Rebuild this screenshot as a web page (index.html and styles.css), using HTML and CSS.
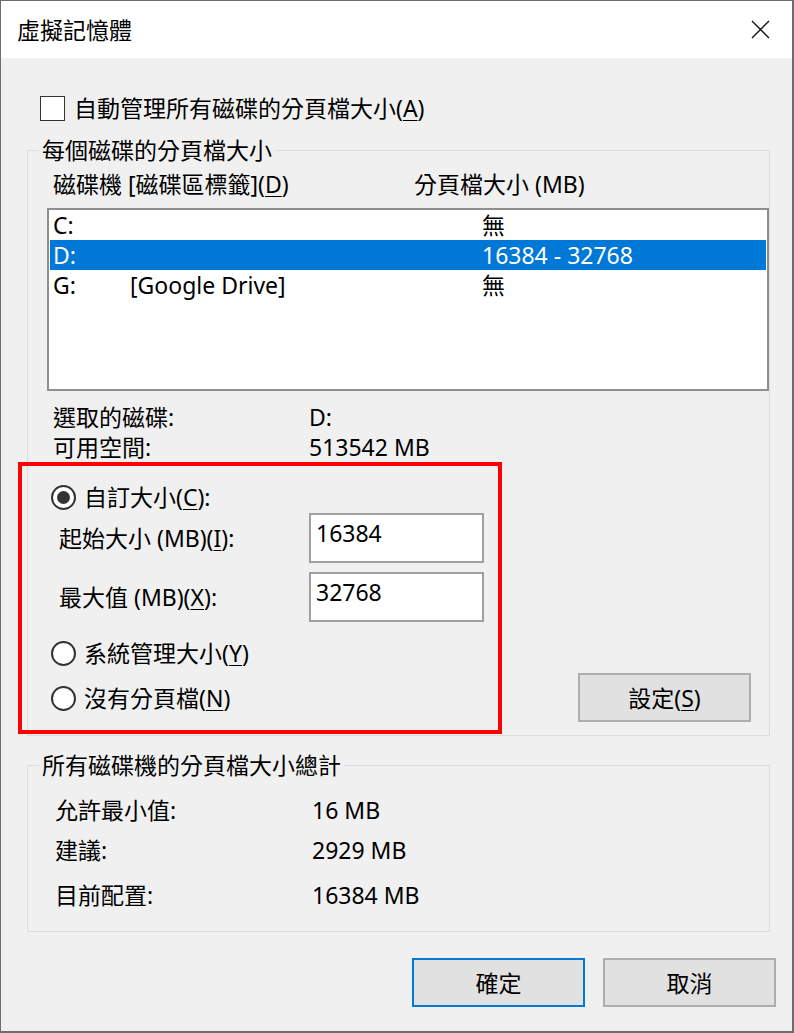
FILE: index.html
```html
<!DOCTYPE html>
<html lang="zh-Hant">
<head>
    <meta charset="UTF-8">
    <meta name="viewport" content="width=device-width, initial-scale=1.0">
    <title>虛擬記憶體</title>
    <link rel="stylesheet" href="styles.css">
</head>
<body>
    <div class="window">
        <div class="titlebar">
            <span class="title">虛擬記憶體</span>
            <span class="close">
                <svg width="19" height="19" viewBox="0 0 19 19">
                    <path d="M1 1 L18 18 M18 1 L1 18" stroke="#111" stroke-width="1.4" fill="none"/>
                </svg>
            </span>
        </div>

        <div class="dialog-body">
            <label class="check-row">
                <span class="checkbox"></span>
                <span>自動管理所有磁碟的分頁檔大小(<u>A</u>)</span>
            </label>

            <fieldset class="group group-drives">
                <legend>每個磁碟的分頁檔大小</legend>

                <div class="disk-header">
                    <span>磁碟機 [磁碟區標籤](<u>D</u>)</span>
                    <span>分頁檔大小 (MB)</span>
                </div>

                <div class="disk-list">
                    <div class="disk-row"><span>C:</span><span></span><span>無</span></div>
                    <div class="disk-row selected"><span>D:</span><span></span><span>16384 - 32768</span></div>
                    <div class="disk-row"><span>G:</span><span>[Google Drive]</span><span>無</span></div>
                </div>

                <div class="disk-info">
                    <span>選取的磁碟:</span><span>D:</span>
                    <span>可用空間:</span><span>513542 MB</span>
                </div>

                <div class="size-area">
                    <div class="size-options">
                        <div class="radio-row first">
                            <span class="radio checked"></span>
                            <span>自訂大小(<u>C</u>):</span>
                        </div>
                        <div class="field-row">
                            <span class="field-label">起始大小 (MB)(<u>I</u>):</span>
                            <div class="textbox">16384</div>
                        </div>
                        <div class="field-row second">
                            <span class="field-label">最大值 (MB)(<u>X</u>):</span>
                            <div class="textbox">32768</div>
                        </div>
                        <div class="radio-row">
                            <span class="radio"></span>
                            <span>系統管理大小(<u>Y</u>)</span>
                        </div>
                        <div class="radio-row last">
                            <span class="radio"></span>
                            <span>沒有分頁檔(<u>N</u>)</span>
                        </div>
                    </div>
                    <button class="btn btn-set" type="button">設定(<u>S</u>)</button>
                </div>
            </fieldset>

            <fieldset class="group group-total">
                <legend>所有磁碟機的分頁檔大小總計</legend>
                <div class="total-row"><span>允許最小值:</span><span>16 MB</span></div>
                <div class="total-row"><span>建議:</span><span>2929 MB</span></div>
                <div class="total-row last"><span>目前配置:</span><span>16384 MB</span></div>
            </fieldset>

            <div class="actions">
                <button class="btn btn-default" type="button">確定</button>
                <button class="btn" type="button">取消</button>
            </div>
        </div>
    </div>
</body>
</html>
```

FILE: styles.css
```css
* {
    box-sizing: border-box;
}

body {
    margin: 0;
    font-family: "Noto Sans", "Noto Sans CJK TC", sans-serif;
    font-size: 23px;
    line-height: 30px;
    color: #000;
}

u {
    text-decoration-thickness: 1px;
    text-underline-offset: 3px;
}

.window {
    width: 794px;
    height: 1033px;
    border: 1px solid #6d6d6d;
    border-right-width: 2px;
    border-bottom-width: 2px;
    background: #f0f0f0;
    display: flex;
    flex-direction: column;
}

.titlebar {
    height: 57px;
    background: #fff;
    display: flex;
    align-items: center;
    justify-content: space-between;
    padding: 0 22px 0 16px;
}

.title {
    font-size: 23px;
}

.close {
    display: flex;
}

.dialog-body {
    padding: 35px 22px 0 26px;
}

.check-row {
    display: flex;
    align-items: center;
    gap: 9px;
    margin-left: 13px;
}

.checkbox {
    width: 25px;
    height: 25px;
    border: 1px solid #333;
    background: #fff;
}

.group {
    margin: 12px 0 0 0;
    padding: 0 0 1px 0;
    border: 1px solid #dcdcdc;
    min-width: 0;
}

.group legend {
    margin-left: 11px;
    padding: 0 3px;
    line-height: 30px;
}

.disk-header {
    display: grid;
    grid-template-columns: 361px auto;
    padding-left: 25px;
    margin-top: 4px;
}

.disk-list {
    margin: 9px 0 0 19px;
    height: 183px;
    border: 2px solid #8f8f8f;
    background: #fff;
    padding: 0 1px;
}

.disk-row {
    display: grid;
    grid-template-columns: 77px 352px auto;
    padding-left: 3px;
    height: 30px;
    align-items: center;
}

.disk-row.selected {
    background: #0078d7;
    color: #fff;
}

.disk-info {
    display: grid;
    grid-template-columns: 256px auto;
    padding-left: 25px;
    margin-top: 11px;
}

.size-area {
    display: flex;
    align-items: flex-end;
    justify-content: space-between;
}

.size-options {
    margin-left: -10px;
    width: 484px;
    height: 272px;
    border: 4px solid #ff0000;
    padding: 16px 0 0 0;
}

.radio-row {
    display: flex;
    align-items: center;
    gap: 8px;
    padding-left: 29px;
    margin-top: 16px;
}

.radio-row.first {
    margin-top: 0;
}

.radio-row.last {
    margin-top: 15px;
}

.radio {
    width: 25px;
    height: 25px;
    border: 2px solid #333;
    border-radius: 50%;
    background: #fff;
    display: flex;
    align-items: center;
    justify-content: center;
}

.radio.checked::after {
    content: "";
    width: 13px;
    height: 13px;
    border-radius: 50%;
    background: #333;
}

.field-row {
    display: flex;
    align-items: center;
    padding-left: 37px;
    margin-top: 1px;
}

.field-row.second {
    margin-top: 9px;
}

.field-label {
    width: 250px;
}

.textbox {
    width: 175px;
    height: 50px;
    border: 2px solid #a0a0a0;
    background: #fff;
    padding: 3px 5px;
}

.btn {
    font: inherit;
    color: #000;
    width: 173px;
    height: 49px;
    background: #e1e1e1;
    border: 2px solid #adadad;
    padding: 0;
}

.btn-set {
    margin: 0 18px 12px 0;
}

.btn-default {
    border-color: #0078d7;
}

.group-total {
    margin-top: 14px;
    padding: 15px 0 21px 0;
}

.total-row {
    display: grid;
    grid-template-columns: 257px auto;
    padding-left: 27px;
    margin-bottom: 10px;
}

.total-row.last {
    margin-top: 15px;
    margin-bottom: 0;
}

.actions {
    display: flex;
    justify-content: flex-end;
    gap: 18px;
    margin: 26px -6px 0 0;
}
```
